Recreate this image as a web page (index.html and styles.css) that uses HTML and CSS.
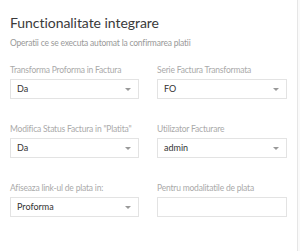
FILE: index.html
```html
<!DOCTYPE html>
<html lang="en">
<head>
    <meta charset="UTF-8">
    <meta name="viewport" content="width=device-width, initial-scale=1.0">
    <title>Functionalitate integrare</title>
    <link rel="stylesheet" href="styles.css">
</head>
<body>

    <!-- Integration settings panel -->
    <div class="panel">
        <h2 class="panel-title">Functionalitate integrare</h2>
        <p class="panel-subtitle">Operatii ce se executa automat la confirmarea platii</p>

        <div class="form-grid">
            <div class="field">
                <label class="field-label">Transforma Proforma in Factura</label>
                <div class="select">Da<span class="caret"></span></div>
            </div>
            <div class="field">
                <label class="field-label">Serie Factura Transformata</label>
                <div class="select">FO<span class="caret"></span></div>
            </div>

            <div class="field">
                <label class="field-label">Modifica Status Factura in "Platita"</label>
                <div class="select">Da<span class="caret"></span></div>
            </div>
            <div class="field">
                <label class="field-label">Utilizator Facturare</label>
                <div class="select">admin<span class="caret"></span></div>
            </div>

            <div class="field">
                <label class="field-label">Afiseaza link-ul de plata in:</label>
                <div class="select">Proforma<span class="caret"></span></div>
            </div>
            <div class="field">
                <label class="field-label">Pentru modalitatile de plata</label>
                <div class="input"></div>
            </div>
        </div>
    </div>

</body>
</html>
```

FILE: styles.css
```css
body {
    margin: 0;
    padding: 0;
    font-family: Lato, "Noto Sans", sans-serif;
    background-color: #fafafa;
    height: 251px;
    overflow: hidden;
}

.panel {
    width: 277px;
    height: 251px;
    padding: 0 10px;
    background-color: #fff;
    border-right: 1px solid #e6e6e6;
}

.panel-title {
    margin: 0;
    padding-top: 14px;
    font-size: 14px;
    font-weight: normal;
    line-height: 18px;
    color: #3a3a3a;
    letter-spacing: -0.05px;
}

.panel-subtitle {
    margin: 4px 0 0;
    font-size: 8.5px;
    line-height: 14px;
    color: #999;
    letter-spacing: -0.2px;
}

.form-grid {
    display: grid;
    grid-template-columns: 129px 130px;
    column-gap: 18px;
    row-gap: 23px;
    margin-top: 13px;
}

.field-label {
    display: block;
    font-size: 8.5px;
    line-height: 14px;
    color: #aaa;
    letter-spacing: -0.2px;
    white-space: nowrap;
}

.select,
.input {
    position: relative;
    box-sizing: border-box;
    height: 20px;
    margin-top: 2px;
    padding-left: 6px;
    border: 1px solid #e3e3e3;
    font-size: 9px;
    line-height: 18px;
    color: #333;
}

.caret {
    position: absolute;
    right: 7px;
    top: 8px;
    width: 0;
    height: 0;
    border-left: 3px solid transparent;
    border-right: 3px solid transparent;
    border-top: 3px solid #999;
}
```
